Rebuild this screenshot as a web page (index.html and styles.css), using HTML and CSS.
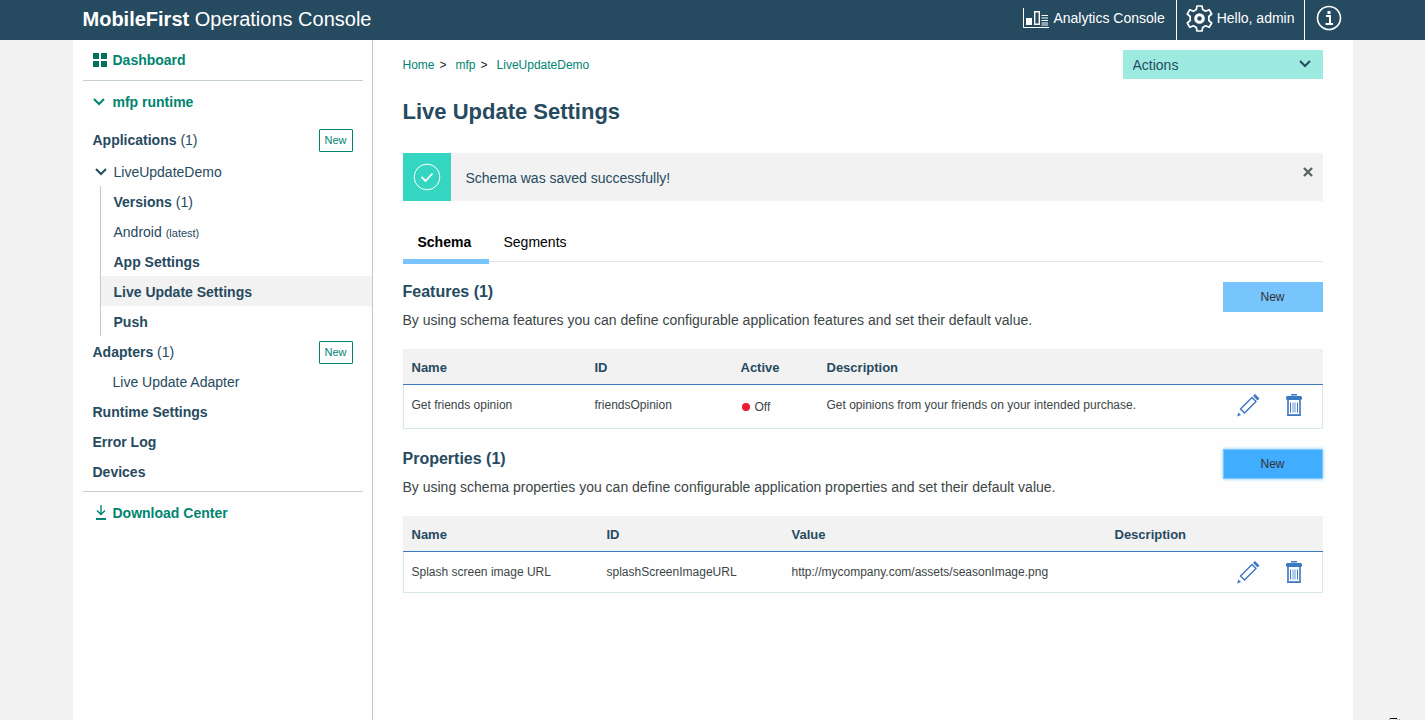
FILE: index.html
```html
<!DOCTYPE html>
<html lang="en">
<head>
<meta charset="utf-8">
<meta name="viewport" content="width=device-width, initial-scale=1">
<title>MobileFirst Operations Console</title>
<link rel="stylesheet" href="styles.css">
</head>
<body>
<svg class="sprite" aria-hidden="true">
  <symbol id="chevron" viewBox="0 0 12 8"><path d="M1 1l5 5 5-5" fill="none" stroke="currentColor" stroke-width="2"/></symbol>
  <symbol id="pencil" viewBox="0 0 24 24">
    <path d="M4.500 16L16 4.500l4 4L8.500 20z" fill="none" stroke="currentColor" stroke-width="1.500" stroke-linejoin="round"/>
    <path d="M17 2.800l2-1.800 4.500 4.500-2 2z" fill="currentColor"/>
    <path d="M2.500 19.500l2.500 2.500L1 23.500z" fill="currentColor"/>
  </symbol>
  <symbol id="trash" viewBox="0 0 16 22">
    <path d="M5 0h6v1H5zM1 2h14l1 1v2l-1 1H1L0 5V3z" fill="currentColor"/>
    <path d="M5 1h6v1H5z" fill="#9bbbe2"/>
    <path d="M1 6h14v16H1z" fill="#5f91d0"/>
    <path d="M3 6h10v14H3z" fill="#fefefe"/>
    <path d="M4.500 8.500v10M11.500 8.500v10" stroke="currentColor" fill="none"/>
    <path d="M7 8.500v10M9 8.500v10" stroke="#9bbbe2" stroke-width="1.500" fill="none"/>
    <path d="M1 21h14v1H1z" fill="currentColor"/>
  </symbol>
</svg>

<header class="topbar">
  <div class="topbar-inner">
    <a class="brand" href="#"><strong>MobileFirst</strong> Operations Console</a>
    <nav class="topnav" aria-label="Account">
      <a class="topnav-item" href="#">
        <svg width="26" height="20" viewBox="0 0 26 20" fill="none" stroke="#fff" aria-hidden="true">
          <path d="M.5 0v19.500H26"/><path d="M3 10h6v7H3z" fill="#fff" stroke="none"/>
          <path d="M11.700 3.700h4.600v12.600h-4.600z" stroke-width="1.400"/>
          <path d="M18.500 7.500H25M18.500 10H25M18.500 12.500H25M18.500 15H25M18.500 17H25"/>
        </svg>
        Analytics Console
      </a>
      <button class="topnav-item topnav-user" type="button">
        <svg width="27" height="27" viewBox="0 0 27 27" fill="none" stroke="#fff" aria-hidden="true">
          <path stroke-width="1.700" stroke-linejoin="round" d="M11 1h5l.7 3.600 2.800 1.600 3.700-1.500 2.500 4.300-2.900 2.500v4l2.900 2.500-2.500 4.300-3.700-1.500-2.800 1.600L16 26h-5l-.7-3.600-2.800-1.600-3.700 1.500L1.300 18l2.900-2.500v-4L1.300 9l2.500-4.300 3.700 1.500 2.800-1.600z"/>
          <circle cx="13.500" cy="13.500" r="3.800" stroke-width="3"/>
        </svg>
        Hello, admin
      </button>
      <button class="topnav-item" type="button" aria-label="About">
        <svg width="26" height="26" viewBox="0 0 26 26" fill="none" stroke="#fff" aria-hidden="true">
          <circle cx="13" cy="13" r="11.500" stroke-width="1.600"/>
          <path d="M10 11h4v8M9.500 19h7.500" stroke-width="2"/><path d="M13 6v3" stroke-width="3"/>
        </svg>
      </button>
    </nav>
  </div>
</header>

<div class="shell">
  <nav class="sidebar" aria-label="Console">
    <a class="nav-top" href="#">
      <svg width="14" height="14" viewBox="0 0 14 14" fill="#00705f" aria-hidden="true"><path d="M0 0h6v6H0zM8 0h6v6H8zM0 8h6v6H0zM8 8h6v6H8z"/></svg>
      Dashboard
    </a>
    <a class="nav-top nav-runtime" href="#"><svg class="chev" aria-hidden="true"><use href="#chevron"/></svg>mfp runtime</a>
    <div class="nav-row nav-apps"><a href="#"><b>Applications</b> (1)</a><button class="new-outline" type="button">New</button></div>
    <a class="nav-row nav-app" href="#"><svg class="chev" aria-hidden="true"><use href="#chevron"/></svg>LiveUpdateDemo</a>
    <div class="nav-tree">
      <a href="#"><span><b>Versions</b> (1)</span></a>
      <a href="#"><span>Android <small>(latest)</small></span></a>
      <a href="#"><b>App Settings</b></a>
      <a class="current" href="#" aria-current="page"><b>Live Update Settings</b></a>
      <a href="#"><b>Push</b></a>
    </div>
    <div class="nav-row"><a href="#"><b>Adapters</b> (1)</a><button class="new-outline" type="button">New</button></div>
    <a class="nav-row nav-indent" href="#">Live Update Adapter</a>
    <a class="nav-row" href="#"><b>Runtime Settings</b></a>
    <a class="nav-row" href="#"><b>Error Log</b></a>
    <a class="nav-row" href="#"><b>Devices</b></a>
    <a class="nav-top nav-download" href="#">
      <svg width="14" height="16" viewBox="0 0 14 16" fill="none" stroke="currentColor" aria-hidden="true"><path d="M8 0v9M4 5.500l4 4 4-4" stroke-width="1.400"/><path d="M3 14h10" stroke-width="2"/></svg>
      Download Center
    </a>
  </nav>

  <main class="content">
    <div class="crumb-row">
      <nav class="crumbs" aria-label="Breadcrumb"><a href="#">Home</a><span>&gt;</span><a href="#">mfp</a><span>&gt;</span><a href="#">LiveUpdateDemo</a></nav>
      <div class="actions">
        <select aria-label="Actions"><option>Actions</option></select>
        <svg class="chev" aria-hidden="true"><use href="#chevron"/></svg>
      </div>
    </div>
    <h1>Live Update Settings</h1>

    <div class="alert" role="status">
      <div class="alert-icon">
        <svg width="28" height="28" viewBox="0 0 28 28" fill="none" stroke="#fff" aria-hidden="true"><circle cx="14" cy="14" r="12.800"/><path d="M8.500 14l4 4 7-7.500" stroke-width="1.800"/></svg>
      </div>
      <p>Schema was saved successfully!</p>
      <button class="alert-close" type="button" aria-label="Dismiss"><svg width="10" height="10" viewBox="0 0 10 10" aria-hidden="true"><path d="M1 1l8 8M9 1L1 9" stroke="currentColor" stroke-width="2.400"/></svg></button>
    </div>

    <div class="tabs" role="tablist">
      <button class="tab active" type="button" role="tab" aria-selected="true">Schema</button>
      <button class="tab" type="button" role="tab" aria-selected="false">Segments</button>
    </div>

    <section class="block">
      <div class="block-head">
        <div>
          <h2>Features (1)</h2>
          <p>By using schema features you can define configurable application features and set their default value.</p>
        </div>
        <button class="new-fill" type="button">New</button>
      </div>
      <table class="grid features">
        <colgroup><col class="f-name"><col class="f-id"><col class="f-active"><col><col class="tools"></colgroup>
        <thead><tr><th>Name</th><th>ID</th><th>Active</th><th>Description</th><td></td></tr></thead>
        <tbody><tr>
          <td>Get friends opinion</td><td>friendsOpinion</td><td><span class="state"><i class="dot"></i>Off</span></td>
          <td>Get opinions from your friends on your intended purchase.</td>
          <td><div class="row-tools">
            <button type="button" aria-label="Edit"><svg width="24" height="24"><use href="#pencil"/></svg></button>
            <button type="button" aria-label="Delete"><svg width="16" height="22"><use href="#trash"/></svg></button>
          </div></td>
        </tr></tbody>
      </table>
    </section>

    <section class="block">
      <div class="block-head">
        <div>
          <h2>Properties (1)</h2>
          <p>By using schema properties you can define configurable application properties and set their default value.</p>
        </div>
        <button class="new-fill focused" type="button">New</button>
      </div>
      <table class="grid">
        <colgroup><col class="p-name"><col class="p-id"><col class="p-value"><col><col class="tools"></colgroup>
        <thead><tr><th>Name</th><th>ID</th><th>Value</th><th>Description</th><td></td></tr></thead>
        <tbody><tr>
          <td>Splash screen image URL</td><td>splashScreenImageURL</td><td>http://mycompany.com/assets/seasonImage.png</td><td></td>
          <td><div class="row-tools">
            <button type="button" aria-label="Edit"><svg width="24" height="24"><use href="#pencil"/></svg></button>
            <button type="button" aria-label="Delete"><svg width="16" height="22"><use href="#trash"/></svg></button>
          </div></td>
        </tr></tbody>
      </table>
    </section>
  </main>
</div>
<svg class="cursor" width="14" height="2" viewBox="0 0 14 2" aria-hidden="true"><path d="M2 .5h7" stroke="#000"/><path d="M1 1.500h1M9 1.500h1M11 1.500h1" stroke="#999"/></svg>
</body>
</html>
```
FILE: styles.css
```css
* { box-sizing: border-box; }

body {
  margin: 0;
  min-height: 100vh;
  display: flex;
  flex-direction: column;
  background: #f2f2f2;
  color: #264a60;
  font-family: "Liberation Sans", Arial, sans-serif;
  font-size: 14px;
  line-height: 20px;
}

a { color: inherit; text-decoration: none; }
button, select { font: inherit; color: inherit; border: 0; border-radius: 0; background: none; padding: 0; margin: 0; cursor: pointer; }
h1, h2, p { margin: 0; }
svg { display: block; flex: none; }
.sprite { position: absolute; width: 0; height: 0; }
.chev { width: 12px; height: 8px; }

.topbar { background: #264a60; color: #fff; }
.topbar-inner {
  display: flex;
  justify-content: space-between;
  width: 100%;
  max-width: 1280px;
  height: 40px;
  margin: 0 auto;
  padding-left: 10px;
}
.brand { font-size: 20px; line-height: 38px; }
.topnav { display: flex; }
.topnav-item {
  display: flex;
  align-items: center;
  gap: 4px;
  height: 40px;
  padding: 0 11px 4px;
}
.topnav-user { padding: 0 9px 4px; }
.topnav-item + .topnav-item { border-left: 1px solid #fff; }

.shell {
  flex: 1;
  display: flex;
  width: 100%;
  max-width: 1280px;
  margin: 0 auto;
  background: #fefefe;
}

.sidebar {
  flex: none;
  width: 300px;
  border-right: 1px solid #c0cccb;
}
.nav-top {
  display: flex;
  align-items: center;
  gap: 6px;
  height: 41px;
  margin: 0 9px 0 10px;
  padding-left: 10px;
  border-bottom: 1px solid #c3cfce;
  color: #008571;
  font-weight: bold;
}
.nav-top .chev { margin-right: 2px; }
.nav-runtime { border: 0; }
.nav-download { margin-top: 5px; height: 43px; border-bottom: 0; border-top: 1px solid #c3cfce; }
.nav-row {
  display: flex;
  align-items: center;
  justify-content: space-between;
  height: 30px;
  padding: 2px 19px 0 20px;
}
.nav-apps { height: 34px; }
.nav-app { justify-content: flex-start; gap: 7px; padding-left: 22px; }
.nav-indent { padding-left: 40px; }
.nav-tree { margin-left: 27px; border-left: 1px solid #c0cccb; }
.nav-tree a { display: flex; align-items: center; height: 30px; padding: 2px 0 0 13px; }
.nav-tree .current { background: #f2f2f2; }
.nav-tree small { font-size: 11px; }
.new-outline {
  width: 34px;
  height: 23px;
  border: 1px solid #008571;
  border-radius: 1px;
  color: #008571;
  font-size: 11px;
}

.content { flex: 1; min-width: 0; padding: 10px 30px 40px; }
.crumb-row { display: flex; justify-content: space-between; align-items: center; }
.crumbs { display: flex; font-size: 12px; color: #008571; }
.crumbs span { margin: 0 9px 0 5px; color: #222; }
.actions { position: relative; width: 200px; }
.actions select {
  display: block;
  width: 100%;
  height: 29px;
  padding: 0 10px;
  appearance: none;
  background: #9debe0;
}
.actions .chev { position: absolute; right: 12px; top: 10px; pointer-events: none; }

h1 { margin: 17px 0 25px; font-size: 22px; line-height: 32px; }

.alert { display: flex; align-items: center; height: 48px; background: #f2f2f2; }
.alert-icon { display: grid; place-items: center; width: 48px; height: 48px; background: #35d6c1; }
.alert p { flex: 1; padding: 2px 0 0 15px; }
.alert-close { align-self: flex-start; padding: 14px 10px; color: #5a6464; }

.tabs { display: flex; margin-top: 26px; height: 35px; border-bottom: 1px solid #dfe6e8; color: #000; }
.tab { min-width: 86px; height: 37px; padding: 0 15px 2px; border-bottom: 5px solid transparent; line-height: 24px; text-align: left; }
.tab.active { border-color: #78c5fd; font-weight: bold; }

.block { margin-top: 20px; }
.block-head { display: flex; justify-content: space-between; align-items: flex-start; height: 67px; }
.block-head p { margin-top: 8px; color: #3c4646; }
h2 { font-size: 16px; line-height: 20px; }
.new-fill { flex: none; width: 100px; height: 30px; background: #78c5fd; color: #323232; font-size: 12px; }
.focused { background: #41adff; outline: 1px solid #82c8fb; outline-offset: -1px; box-shadow: 0 0 3px #78c5fd; }

.grid { width: 100%; table-layout: fixed; border-collapse: separate; border-spacing: 0; color: #3c4646; font-size: 12px; }
.grid thead { background: #f2f2f2; }
.grid thead th, .grid thead td { border-bottom: 1px solid #3d78c2; }
.grid th { height: 36px; padding: 2px 9px 0; color: #264a60; font-size: 13px; text-align: left; }
.grid tbody td { height: 41px; padding: 0 9px; border-bottom: 1px solid #d8e8e5; white-space: nowrap; }
.grid tbody td:first-child { padding-left: 8px; border-left: 1px solid #d8e8e5; }
.grid tbody td:last-child { border-right: 1px solid #d8e8e5; }
.features tbody td { height: 44px; padding-bottom: 4px; }
.f-name { width: 183px; }
.f-id { width: 146px; }
.f-active { width: 86px; }
.p-name { width: 195px; }
.p-id { width: 185px; }
.p-value { width: 323px; }
.tools { width: 96px; }
.state { display: flex; align-items: center; gap: 5px; padding: 4px 0 0 1px; }
.dot { width: 8px; height: 8px; border-radius: 50%; background: #ed1b2e; }
.row-tools { display: flex; align-items: center; justify-content: space-between; padding-right: 11px; color: #3d78c2; }

.cursor { position: fixed; right: 23px; bottom: 0; }
```
